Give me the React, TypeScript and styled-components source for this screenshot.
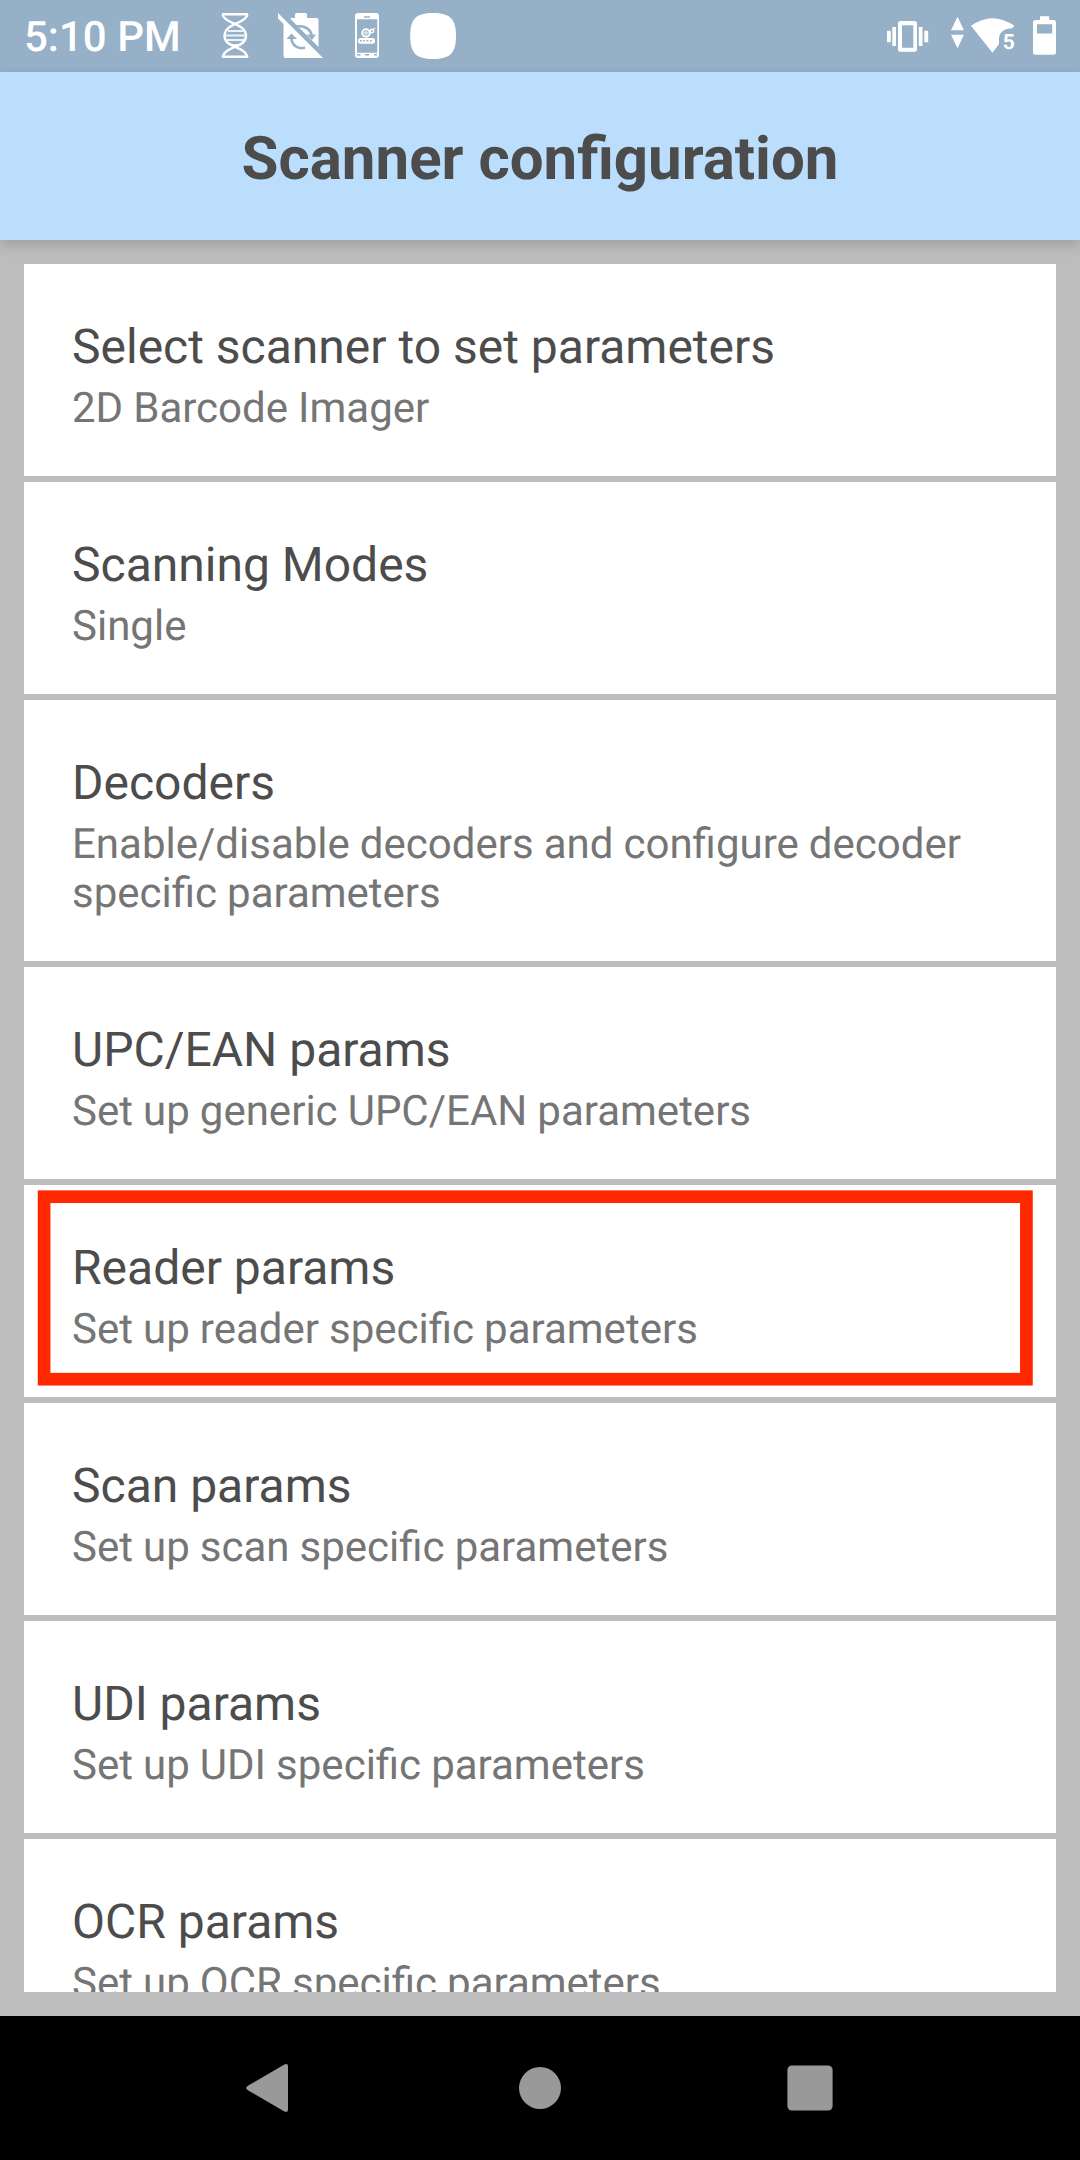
import React from 'react';
import styled, { createGlobalStyle } from 'styled-components';

const GlobalStyle = createGlobalStyle`
  body {
    margin: 0;
    background: #bdbdbd;
    font-family: Roboto, "Liberation Sans", sans-serif;
    text-rendering: geometricPrecision;
  }
`;

const Screen = styled.div`
  width: 1080px;
  height: 2160px;
  display: flex;
  flex-direction: column;
  overflow: hidden;
  background: #bdbdbd;
`;

const StatusBar = styled.div`
  flex: none;
  height: 72px;
  box-sizing: border-box;
  padding: 0 24px;
  display: flex;
  justify-content: space-between;
  background: #95b0c7;
  color: #fff;
`;

const StatusGroup = styled.div`
  display: flex;
  align-items: center;
`;

const Clock = styled.span`
  width: 197px;
  padding-top: 4px;
  font-size: 42px;
  font-weight: 500;
  line-height: 50px;
  white-space: nowrap;
`;

const Glyph = styled.svg<{ $gap?: number }>`
  display: block;
  flex: none;
  height: 72px;
  margin-left: ${(p) => p.$gap ?? 0}px;
`;

const Header = styled.header`
  flex: none;
  height: 168px;
  z-index: 1;
  display: flex;
  align-items: center;
  justify-content: center;
  background: #badefb;
  box-shadow: 0 5px 12px rgba(0, 0, 0, 0.16);
`;

const Heading = styled.h1`
  margin: 6px 0 0;
  font-size: 60px;
  font-weight: 700;
  line-height: 70px;
  color: #4c4c4c;
`;

const Content = styled.main`
  flex: 1;
  min-height: 0;
  box-sizing: border-box;
  padding: 24px;
`;

const List = styled.ul`
  height: 100%;
  margin: 0;
  padding: 0;
  list-style: none;
  display: flex;
  flex-direction: column;
  gap: 6px;
  overflow: hidden;
`;

const Row = styled.li`
  flex: none;
  position: relative;
  padding: 55px 48px 43px;
  background: #fff;
`;

const RowTitle = styled.div`
  font-size: 48px;
  line-height: 56px;
  color: #4c4c4c;
`;

const RowSummary = styled.div`
  margin-top: 9px;
  font-size: 42px;
  line-height: 49px;
  word-spacing: -0.35px;
  color: #757575;
`;

const Highlight = styled.svg`
  position: absolute;
  left: 0;
  top: 0;
  width: 100%;
  height: 100%;
`;

const NavBar = styled.nav`
  flex: none;
  height: 144px;
  display: flex;
  justify-content: center;
  background: #000;
`;

const NavButton = styled.button`
  width: 270px;
  height: 144px;
  padding: 0;
  border: 0;
  background: none;
  color: #999;
`;

const NavGlyph = styled.svg`
  display: block;
  width: 270px;
  height: 144px;
`;

const SubLabel = styled.text`
  font-family: Roboto, sans-serif;
  font-size: 21px;
  font-weight: 700;
`;

const DnaIcon = () => (
  <Glyph width="28" viewBox="221 0 28 72" fill="none" stroke="#fff" strokeWidth="2.4">
    <path d="M222 14.2H248M222 56.8H248" />
    <path d="M222.5 15C225 24 246 23 246 36C246 48 225 46 222.500 57" />
    <path d="M247.500 15C245 24 224.500 23 224.500 36C224.500 48 245 46 247.500 57" />
    <path d="M228 31H243M226 35.500H245M227 40H244M230 45H241" strokeWidth="1.800" opacity=".85" />
  </Glyph>
);

const CameraOffIcon = () => (
  <Glyph $gap={29} width="46" viewBox="278 0 46 72">
    <path
      fill="#fff"
      d="M295 18V14.500Q295 13 296.500 13H305.500Q307 13 307 14.500V18H316.500Q318.500 18 318.500 20V47L290.500 19V18ZM278 13L323 58H285.500Q283.500 58 283.500 56V24L278 18.500Z"
    />
    <path d="M294 27.500C301 24.500 310 27 312 36" fill="none" stroke="#95b0c7" strokeWidth="2.600" />
    <path d="M306.500 34.500H316L312 40Z" fill="#95b0c7" />
    <path d="M291.500 38C291.500 45 298 50 305 47.500" fill="none" stroke="#95b0c7" strokeWidth="2.600" />
    <path d="M286.500 39L291.500 33.500L297 39Z" fill="#95b0c7" />
    <path d="M288 21L318 51" stroke="#95b0c7" strokeWidth="1.600" />
  </Glyph>
);

const PhoneIcon = () => (
  <Glyph $gap={31} width="25" viewBox="355 0 25 72">
    <path
      fill="#fff"
      fillRule="evenodd"
      d="M358 13H376Q379 13 379 16V55Q379 58 376 58H358Q355 58 355 55V16Q355 13 358 13ZM357 19.300V52.700H377.300V19.300Z"
    />
    <path d="M364 17H370M357 54.800H360.500M365 54.800H369M374 54.800H377" stroke="#95b0c7" strokeWidth="1.500" />
    <circle cx="366" cy="33" r="3.700" fill="none" stroke="#fff" strokeWidth="2" />
    <circle cx="366" cy="33" r="1.300" fill="none" stroke="#fff" strokeWidth="1" />
    <circle cx="372" cy="31" r="1.700" fill="none" stroke="#fff" strokeWidth="1.400" />
    <path d="M373 29.500L375.500 28" stroke="#fff" strokeWidth="1" />
    <rect x="358" y="38" width="17" height="5.700" rx="2.500" fill="#fff" />
    <path d="M360 40.800H372" stroke="#95b0c7" strokeWidth="1.500" strokeDasharray="1.800 1.500" />
  </Glyph>
);

const SquircleIcon = () => (
  <Glyph $gap={30} width="46" viewBox="410 0 46 72" fill="#fff">
    <path d="M433 13C450 13 456 19 456 36C456 53 450 59 433 59C416 59 410.200 53 410.200 36C410.200 19 416 13 433 13Z" />
  </Glyph>
);

const VibrateIcon = () => (
  <Glyph width="42" viewBox="887 0 42 72" fill="#fff">
    <path fillRule="evenodd" d="M900.500 21H914.500Q917 21 917 23.500V49.300Q917 51.800 914.500 51.800H900.500Q898 51.800 898 49.300V23.500Q898 21 900.500 21ZM902 25.300V47.700H913.300V25.300Z" />
    <path d="M887 30.700H890.800V42.300H887ZM892.300 27H896V46H892.300ZM918.800 27H922.500V46H918.800ZM924.300 30.700H928.200V42.300H924.300Z" />
  </Glyph>
);

const WifiIcon = () => (
  <Glyph $gap={22} width="65" viewBox="951 0 65 72" fill="#fff">
    <path d="M957.500 16.800L964 30.200H951ZM951 34.800H964L957.500 48.200Z" />
    <path d="M971 25.800Q992.500 10.500 1014.300 25.800L1012.300 28.300C1004 28.300 999 32.500 999 39V44L992.500 52.700Z" />
    <SubLabel x="1002.800" y="49.200">5</SubLabel>
  </Glyph>
);

const BatteryIcon = () => (
  <Glyph $gap={17} width="23" viewBox="1033 0 23 72" fill="#fff">
    <path fillRule="evenodd" d="M1040 20V16.200H1049.200V20H1053.500Q1056 20 1056 22.500V52.300Q1056 54.800 1053.500 54.800H1035.500Q1033 54.800 1033 52.300V22.500Q1033 20 1035.500 20ZM1037 24.200V33.500H1052.200V24.200Z" />
  </Glyph>
);

const BackIcon = () => (
  <NavGlyph viewBox="0 0 270 144" fill="currentColor">
    <path d="M112.500 70L149 48.700Q153 46.700 153 50.500V93.500Q153 97.300 149 95.300L112.500 74Q110 72 112.500 70Z" />
  </NavGlyph>
);

const HomeIcon = () => (
  <NavGlyph viewBox="0 0 270 144" fill="currentColor">
    <circle cx="135" cy="72" r="21" />
  </NavGlyph>
);

const RecentsIcon = () => (
  <NavGlyph viewBox="0 0 270 144" fill="currentColor">
    <rect x="112.400" y="49.400" width="45.200" height="45.200" rx="4.500" />
  </NavGlyph>
);

interface Setting {
  title: string;
  summary: string;
  highlighted?: boolean;
}

const settings: Setting[] = [
  { title: 'Select scanner to set parameters', summary: '2D Barcode Imager' },
  { title: 'Scanning Modes', summary: 'Single' },
  { title: 'Decoders', summary: 'Enable/disable decoders and configure decoder specific parameters' },
  { title: 'UPC/EAN params', summary: 'Set up generic UPC/EAN parameters' },
  { title: 'Reader params', summary: 'Set up reader specific parameters', highlighted: true },
  { title: 'Scan params', summary: 'Set up scan specific parameters' },
  { title: 'UDI params', summary: 'Set up UDI specific parameters' },
  { title: 'OCR params', summary: 'Set up OCR specific parameters' },
];

export default function App() {
  return (
    <Screen>
      <GlobalStyle />
      <StatusBar>
        <StatusGroup>
          <Clock>5:10 PM</Clock>
          <DnaIcon />
          <CameraOffIcon />
          <PhoneIcon />
          <SquircleIcon />
        </StatusGroup>
        <StatusGroup>
          <VibrateIcon />
          <WifiIcon />
          <BatteryIcon />
        </StatusGroup>
      </StatusBar>
      <Header>
        <Heading>Scanner configuration</Heading>
      </Header>
      <Content>
        <List>
          {settings.map((s) => (
            <Row key={s.title}>
              <RowTitle>{s.title}</RowTitle>
              <RowSummary>{s.summary}</RowSummary>
              {s.highlighted && (
                <Highlight viewBox="0 0 1032 212">
                  <rect x="20.100" y="11.700" width="982.300" height="182.500" fill="none" stroke="#ff2800" strokeWidth="12.700" />
                </Highlight>
              )}
            </Row>
          ))}
        </List>
      </Content>
      <NavBar>
        <NavButton aria-label="Back"><BackIcon /></NavButton>
        <NavButton aria-label="Home"><HomeIcon /></NavButton>
        <NavButton aria-label="Recent apps"><RecentsIcon /></NavButton>
      </NavBar>
    </Screen>
  );
}
